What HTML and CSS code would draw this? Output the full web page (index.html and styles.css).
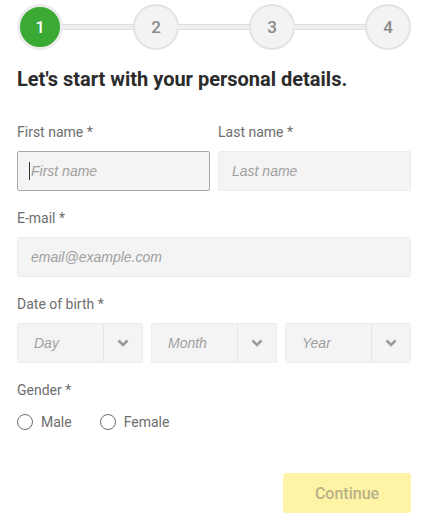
FILE: index.html
```html
<!DOCTYPE html>
<html lang="en">
<head>
<meta charset="utf-8">
<title>Personal details</title>
<link rel="stylesheet" href="styles.css">
</head>
<body>
<div class="page">
  <div class="stepper">
    <div class="step active">1</div>
    <div class="bar"></div>
    <div class="step">2</div>
    <div class="bar"></div>
    <div class="step">3</div>
    <div class="bar"></div>
    <div class="step">4</div>
  </div>

  <h1 class="title">Let's start with your personal details.</h1>

  <div class="row two">
    <div class="field">
      <label class="label">First name *</label>
      <div class="input-wrap">
        <input class="input focused" type="text" placeholder="First name">
        <span class="caret"></span>
      </div>
    </div>
    <div class="field">
      <label class="label">Last name *</label>
      <input class="input" type="text" placeholder="Last name">
    </div>
  </div>

  <div class="field">
    <label class="label">E-mail *</label>
    <input class="input" type="text" placeholder="email@example.com">
  </div>

  <div class="field">
    <label class="label">Date of birth *</label>
    <div class="row three">
      <div class="select"><span class="select-text">Day</span><span class="select-arrow"><svg width="12" height="8" viewBox="0 0 12 8"><path d="M1.5 1.5 L6 6 L10.5 1.5" fill="none" stroke="#9a9a9a" stroke-width="2.6" stroke-linecap="butt" stroke-linejoin="miter"/></svg></span></div>
      <div class="select"><span class="select-text">Month</span><span class="select-arrow"><svg width="12" height="8" viewBox="0 0 12 8"><path d="M1.5 1.5 L6 6 L10.5 1.5" fill="none" stroke="#9a9a9a" stroke-width="2.6" stroke-linecap="butt" stroke-linejoin="miter"/></svg></span></div>
      <div class="select"><span class="select-text">Year</span><span class="select-arrow"><svg width="12" height="8" viewBox="0 0 12 8"><path d="M1.5 1.5 L6 6 L10.5 1.5" fill="none" stroke="#9a9a9a" stroke-width="2.6" stroke-linecap="butt" stroke-linejoin="miter"/></svg></span></div>
    </div>
  </div>

  <div class="field gender">
    <label class="label">Gender *</label>
    <div class="radios">
      <span class="radio"><span class="radio-dot"></span>Male</span>
      <span class="radio"><span class="radio-dot"></span>Female</span>
    </div>
  </div>

  <div class="actions">
    <button class="btn" type="button">Continue</button>
  </div>
</div>
</body>
</html>
```

FILE: styles.css
```css
* { box-sizing: border-box; }
html, body { margin: 0; padding: 0; background: #fff; }
body { font-family: Roboto, "Noto Sans", "Liberation Sans", sans-serif; color: #333; }

.page { padding: 4px 24px 0 17px; width: 435px; }

.stepper { display: flex; align-items: center; width: 394px; }
.step {
  width: 46px; height: 46px; border-radius: 50%;
  background: #f3f3f3; border: 2px solid #e3e3e3;
  display: flex; align-items: center; justify-content: center;
  font-size: 17px; font-weight: 500; color: #8a8a8a; flex: none;
}
.step.active { background: #3aaa35; color: #fff; border: 3px solid #ececec; }
.bar {
  flex: 1; height: 6px; background: #efefef;
  border-top: 1px solid #e0e0e0; border-bottom: 1px solid #e0e0e0;
  margin: 0 -2px;
}

.title {
  margin: 17px 0 30px; font-size: 20px; line-height: 24px; font-weight: 700; color: #2b2b2b;
}

.row { display: flex; gap: 8px; }
.row.two .field { flex: 1; }
.field { margin-bottom: 16px; }

.label { display: block; font-size: 14px; line-height: 20px; color: #6e6e6e; padding-top: 1px; margin-bottom: 9px; }

.input-wrap { position: relative; }
.input {
  display: block; width: 100%; height: 40px;
  background: #f4f4f4; border: 1px solid #ececec; border-radius: 2px;
  padding: 0 13px; font-family: "Liberation Sans", Arial, sans-serif; font-size: 14px; color: #333; outline: none;
}
.input.focused { border-color: #a8a8a8; }
.input::placeholder { color: #a0a0a0; font-style: italic; }
.caret {
  position: absolute; left: 12px; top: 11px; width: 1px; height: 18px; background: #333;
}

.row.three { gap: 8px; }
.select {
  flex: 1; height: 40px; display: flex;
  background: #f4f4f4; border: 1px solid #ececec; border-radius: 2px;
}
.select-text {
  flex: 1; display: flex; align-items: center; padding-left: 16px;
  font-family: "Liberation Sans", Arial, sans-serif;
  font-size: 14px; font-style: italic; color: #a0a0a0;
}
.select-arrow {
  width: 39px; border-left: 1px solid #e6e6e6;
  display: flex; align-items: center; justify-content: center;
}
.select-arrow svg { display: block; }

.gender .label { margin-bottom: 12px; }
.radios { display: flex; gap: 28px; font-size: 14px; line-height: 20px; color: #6e6e6e; }
.radio { display: flex; align-items: center; gap: 8px; }
.radio-dot {
  width: 16px; height: 16px; border-radius: 50%; border: 1px solid #6e6e6e; background: #fff;
}

.actions { display: flex; justify-content: flex-end; width: 394px; margin-top: 41px; }
.btn {
  width: 128px; height: 40px; border: none; border-radius: 3px;
  background: #fff3a5; color: #b8b187; font-family: inherit; font-size: 16px; font-weight: 500;
}
```
